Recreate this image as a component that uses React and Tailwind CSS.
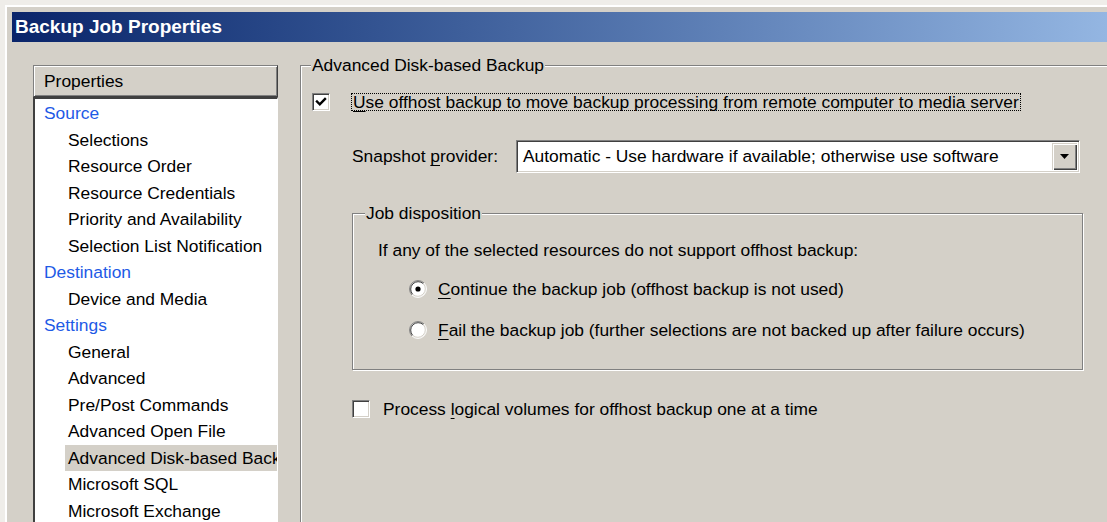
import React from "react";

const items = [
  { label: "Source", group: true },
  { label: "Selections" },
  { label: "Resource Order" },
  { label: "Resource Credentials" },
  { label: "Priority and Availability" },
  { label: "Selection List Notification" },
  { label: "Destination", group: true },
  { label: "Device and Media" },
  { label: "Settings", group: true },
  { label: "General" },
  { label: "Advanced" },
  { label: "Pre/Post Commands" },
  { label: "Advanced Open File" },
  { label: "Advanced Disk-based Backup", selected: true },
  { label: "Microsoft SQL" },
  { label: "Microsoft Exchange" },
];

function CheckBox({ checked }) {
  return (
    <span className="flex h-[18px] w-[18px] shrink-0 items-center justify-center border border-[#808080] border-r-white border-b-white bg-white shadow-[inset_1px_1px_0_#404040,inset_-1px_-1px_0_#d4d0c8]">
      {checked && (
        <svg width="12" height="12" viewBox="0 0 12 12">
          <polyline points="2,5.5 4.8,8.3 10,3" fill="none" stroke="#000" strokeWidth="2.4" strokeLinecap="square" />
        </svg>
      )}
    </span>
  );
}

function Radio({ checked }) {
  return (
    <svg width="18" height="18" viewBox="0 0 18 18" className="shrink-0">
      <circle cx="9" cy="9" r="8" fill="#fff" />
      <path d="M2.99 15.01 A8.5 8.5 0 0 1 15.01 2.99" fill="none" stroke="#808080" strokeWidth="1" />
      <path d="M3.7 14.3 A7.5 7.5 0 0 1 14.3 3.7" fill="none" stroke="#404040" strokeWidth="1" />
      <path d="M15.01 2.99 A8.5 8.5 0 0 1 2.99 15.01" fill="none" stroke="#fff" strokeWidth="1" />
      <path d="M14.3 3.7 A7.5 7.5 0 0 1 3.7 14.3" fill="none" stroke="#d4d0c8" strokeWidth="1" />
      {checked && <circle cx="9" cy="9" r="2.6" fill="#000" />}
    </svg>
  );
}

function Combo({ value }) {
  return (
    <div className="flex h-[33px] w-[564px] items-stretch border border-[#808080] border-r-white border-b-white bg-white shadow-[inset_1px_1px_0_#404040,inset_-1px_-1px_0_#d4d0c8] p-[2px]">
      <span className="flex flex-1 items-center pl-[4px] whitespace-nowrap">{value}</span>
      <span className="flex w-[25px] items-center justify-center bg-[#d4d0c8] shadow-[inset_1px_1px_0_#d4d0c8,inset_2px_2px_0_#fff,inset_-1px_-1px_0_#404040,inset_-2px_-2px_0_#808080]">
        <svg width="9" height="5" viewBox="0 0 9 5">
          <polygon points="0,0 9,0 4.5,5" fill="#000" />
        </svg>
      </span>
    </div>
  );
}

function U({ children }) {
  return <span className="underline decoration-1 underline-offset-[3px]">{children}</span>;
}

export default function App() {
  return (
    <div className="h-[522px] w-[1107px] overflow-hidden bg-[#d4d0c8] font-['Liberation_Sans',Arial,sans-serif] text-[17.4px] text-black">
      <div className="h-full border-t-[5px] border-l-[5px] border-[#efede9]">
        <div className="flex h-full flex-col border-t-2 border-l-2 border-white pt-[5px] pl-[5px]">
          {/* caption */}
          <div className="flex h-[30px] shrink-0 items-center bg-linear-to-r from-[#0a246a] to-[#94b6e2] pl-[3px] text-[19px] font-bold text-white">
            Backup Job Properties
          </div>

          <div className="flex min-h-0 flex-1 pl-[21px]">
            {/* properties tree */}
            <div className="mt-[23px] flex w-[245px] shrink-0 flex-col">
              <div className="flex h-[32px] shrink-0 items-center border border-[#808080] border-r-[#404040] border-b-[#404040] pl-[10px] shadow-[inset_1px_1px_0_#fff,inset_-1px_-1px_0_#808080]">
                Properties
              </div>
              <div className="flex-1 border-l-2 border-t-2 border-[#404040] border-r border-r-white bg-white pt-[1px]">
                {items.map((it) =>
                  it.group ? (
                    <div key={it.label} className="flex h-[26.5px] items-center pl-[9px] text-[#1e5ae6]">
                      {it.label}
                    </div>
                  ) : (
                    <div key={it.label} className="flex h-[26.5px] overflow-hidden pl-[30px]">
                      <span className={`flex flex-1 items-center whitespace-nowrap pl-[3px] ${it.selected ? "bg-[#d4d0c8]" : ""}`}>
                        {it.label}
                      </span>
                    </div>
                  )
                )}
              </div>
            </div>

            {/* page */}
            <fieldset className="mt-[13px] ml-[22px] min-w-0 flex-1 border-t border-l border-[#808080] shadow-[inset_1px_1px_0_#fff]">
              <legend className="ml-[10px] bg-[#d4d0c8] px-[1px] leading-[20px]">Advanced Disk-based Backup</legend>

              <div className="mt-[18px] flex items-center pl-[11px]">
                <CheckBox checked />
                <span className="ml-[21px] border border-dotted border-black px-[1px] leading-[16px]">
                  <U>U</U>se offhost backup to move backup processing from remote computer to media server
                </span>
              </div>

              <div className="mt-[29px] flex items-center pl-[51px]">
                <span className="w-[164px] shrink-0">
                  Snapshot <U>p</U>rovider:
                </span>
                <Combo value="Automatic - Use hardware if available; otherwise use software" />
              </div>

              <fieldset className="mt-[30px] ml-[51px] w-[731px] min-w-0 border border-[#808080] pb-[29px] shadow-[inset_1px_1px_0_#fff,1px_1px_0_#fff]">
                <legend className="ml-[12px] bg-[#d4d0c8] px-[1px] leading-[20px]">Job disposition</legend>
                <div className="mt-[17px] pl-[25px] leading-[20px]">
                  If any of the selected resources do not support offhost backup:
                </div>
                <div className="mt-[19px] flex h-[20px] items-center pl-[56px]">
                  <Radio checked />
                  <span className="ml-[11px]">
                    <U>C</U>ontinue the backup job (offhost backup is not used)
                  </span>
                </div>
                <div className="mt-[21px] flex h-[20px] items-center pl-[56px]">
                  <Radio />
                  <span className="ml-[11px]">
                    <U>F</U>ail the backup job (further selections are not backed up after failure occurs)
                  </span>
                </div>
              </fieldset>

              <div className="mt-[29px] flex h-[20px] items-center pl-[51px]">
                <CheckBox />
                <span className="ml-[13px]">
                  Process <U>l</U>ogical volumes for offhost backup one at a time
                </span>
              </div>
            </fieldset>
          </div>
        </div>
      </div>
    </div>
  );
}
